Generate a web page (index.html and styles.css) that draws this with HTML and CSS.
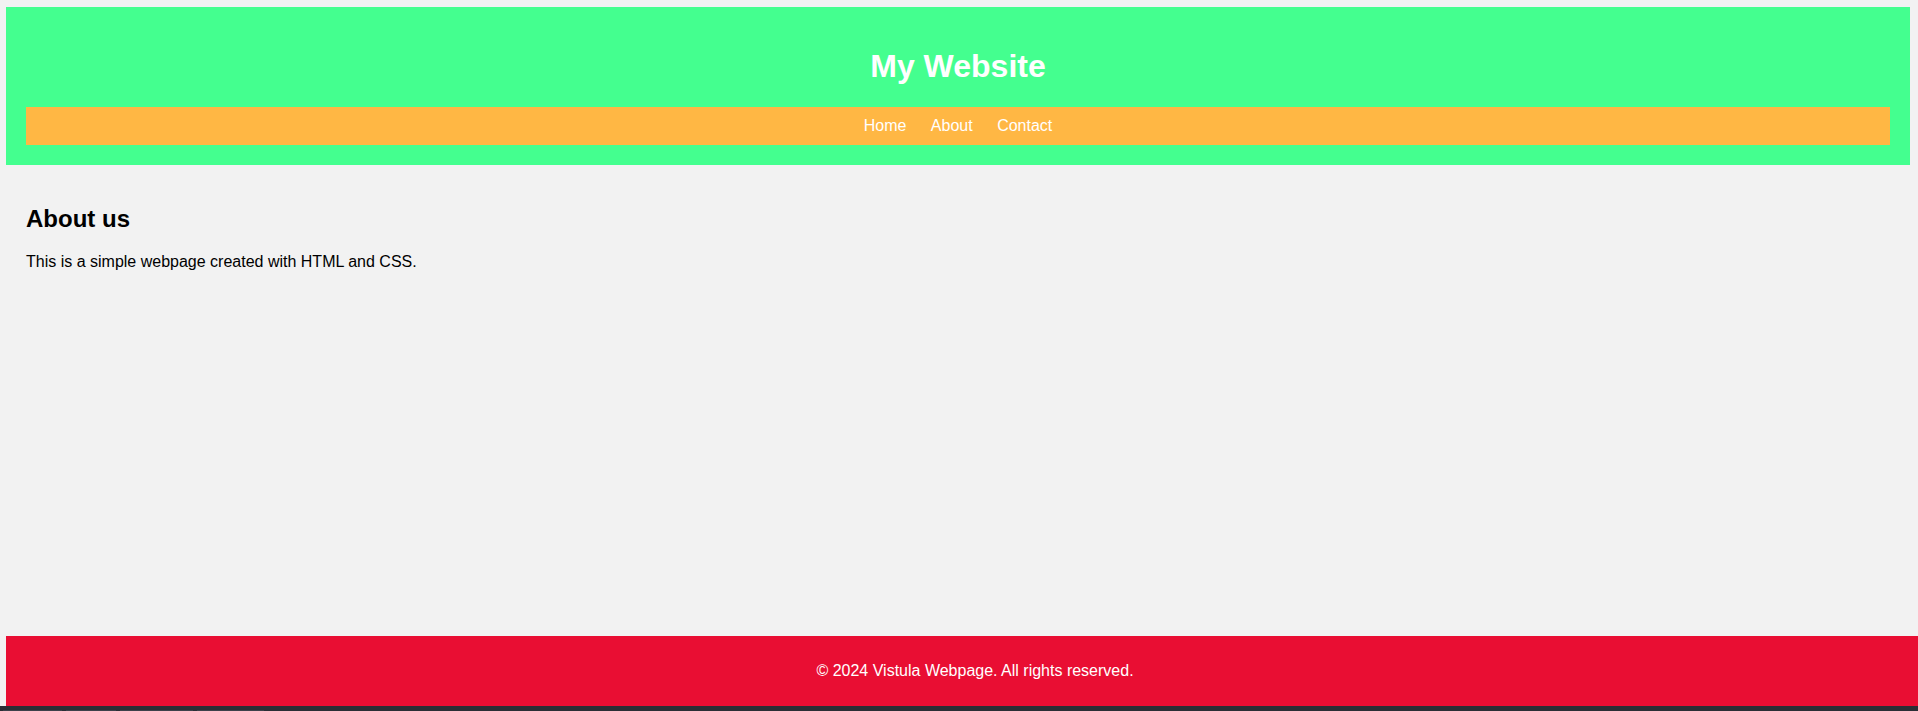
FILE: index.html
```html
<!DOCTYPE html>
<html lang="en">
<head>
<meta charset="UTF-8">
<title>My Website</title>
<link rel="stylesheet" href="styles.css">
</head>
<body>
  <header class="site-header">
    <h1 class="site-title">My Website</h1>
    <nav class="site-nav">
      <a href="#" class="nav-link">Home</a>
      <a href="#" class="nav-link">About</a>
      <a href="#" class="nav-link">Contact</a>
    </nav>
  </header>
  <main class="content">
    <h2 class="content-title">About us</h2>
    <p class="content-text">This is a simple webpage created with HTML and CSS.</p>
  </main>
  <footer class="site-footer">
    <p class="footer-text">&copy; 2024 Vistula Webpage. All rights reserved.</p>
  </footer>
  <div class="taskbar">
    <span class="tab tab-a"></span>
    <span class="tab tab-b"></span>
    <span class="tab tab-c"></span>
    <span class="tab tab-d"></span>
  </div>
</body>
</html>
```

FILE: styles.css
```css
html {
  background: #f2f2f2;
}

body {
  margin: 7px 8px 0 6px;
  font-family: "Liberation Sans", Arial, sans-serif;
  font-size: 16px;
  color: #000;
  background: #f2f2f2;
}

.site-header {
  background: #44ff8f;
  padding: 20px;
  text-align: center;
  color: #fff;
}

.site-title {
  font-size: 32px;
  font-weight: bold;
  margin: 21.44px 0;
}

.site-nav {
  background: #ffb744;
  padding: 10px;
  text-align: center;
}

.nav-link {
  color: #fff;
  text-decoration: none;
  margin: 0 10px;
}

.content {
  padding: 20px;
}

.content-title {
  font-size: 24px;
  font-weight: bold;
  margin: 19.92px 0;
}

.content-text {
  margin: 16px 0;
}

.site-footer {
  position: fixed;
  left: 6px;
  right: 0;
  bottom: 5px;
  padding: 10px 10px 10px 36px;
  background: #e90e33;
  color: #fff;
  text-align: center;
}

.footer-text {
  margin: 16px 0;
}

.taskbar {
  position: fixed;
  left: 0;
  right: 0;
  bottom: 0;
  height: 5px;
  background: #2a2e35;
  display: flex;
  align-items: flex-end;
  gap: 4px;
  padding-left: 3px;
}

.tab {
  height: 1px;
  background: #3c414a;
}

.tab-a { width: 59px; }
.tab-b { width: 50px; }
.tab-c { width: 73px; }
.tab-d { width: 67px; }
```
